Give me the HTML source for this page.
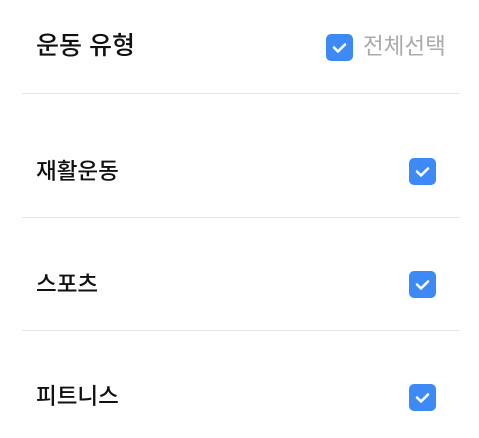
<!DOCTYPE html>
<html><head><meta charset="utf-8"><style>
body{margin:0;width:479px;height:438px;background:#fff;position:relative;overflow:hidden;font-family:"Liberation Sans","Noto Sans CJK KR",sans-serif;}
.t{position:absolute;font-size:22.5px;line-height:28px;color:#111;font-weight:500;}
.cb{position:absolute;width:27px;height:27px;background:#3d8af7;border-radius:5px;}
.cb svg{position:absolute;left:0;top:0}
.ln{position:absolute;left:22px;width:438px;height:1px;background:#e6e6e6;}
</style></head><body>
<div class="t" style="left:36px;top:31px;font-size:25px;line-height:30px;">운동 유형</div>
<div class="cb" style="left:326px;top:34px;"><svg width="27" height="27"><path d="M8 13.5l4 4 7-7" fill="none" stroke="#fff" stroke-width="2.6" stroke-linecap="round" stroke-linejoin="round"/></svg></div>
<div class="t" style="left:363px;top:33px;color:#aaa;font-weight:400;">전체선택</div>
<div class="ln" style="top:93px"></div>
<div class="t" style="left:36px;top:158px;">재활운동</div>
<div class="cb" style="left:409px;top:158px;"><svg width="27" height="27"><path d="M8 13.5l4 4 7-7" fill="none" stroke="#fff" stroke-width="2.6" stroke-linecap="round" stroke-linejoin="round"/></svg></div>
<div class="ln" style="top:217px"></div>
<div class="t" style="left:36px;top:271px;">스포츠</div>
<div class="cb" style="left:409px;top:271px;"><svg width="27" height="27"><path d="M8 13.5l4 4 7-7" fill="none" stroke="#fff" stroke-width="2.6" stroke-linecap="round" stroke-linejoin="round"/></svg></div>
<div class="ln" style="top:330px"></div>
<div class="t" style="left:36px;top:383px;">피트니스</div>
<div class="cb" style="left:409px;top:384px;"><svg width="27" height="27"><path d="M8 13.5l4 4 7-7" fill="none" stroke="#fff" stroke-width="2.6" stroke-linecap="round" stroke-linejoin="round"/></svg></div>
</body></html>
